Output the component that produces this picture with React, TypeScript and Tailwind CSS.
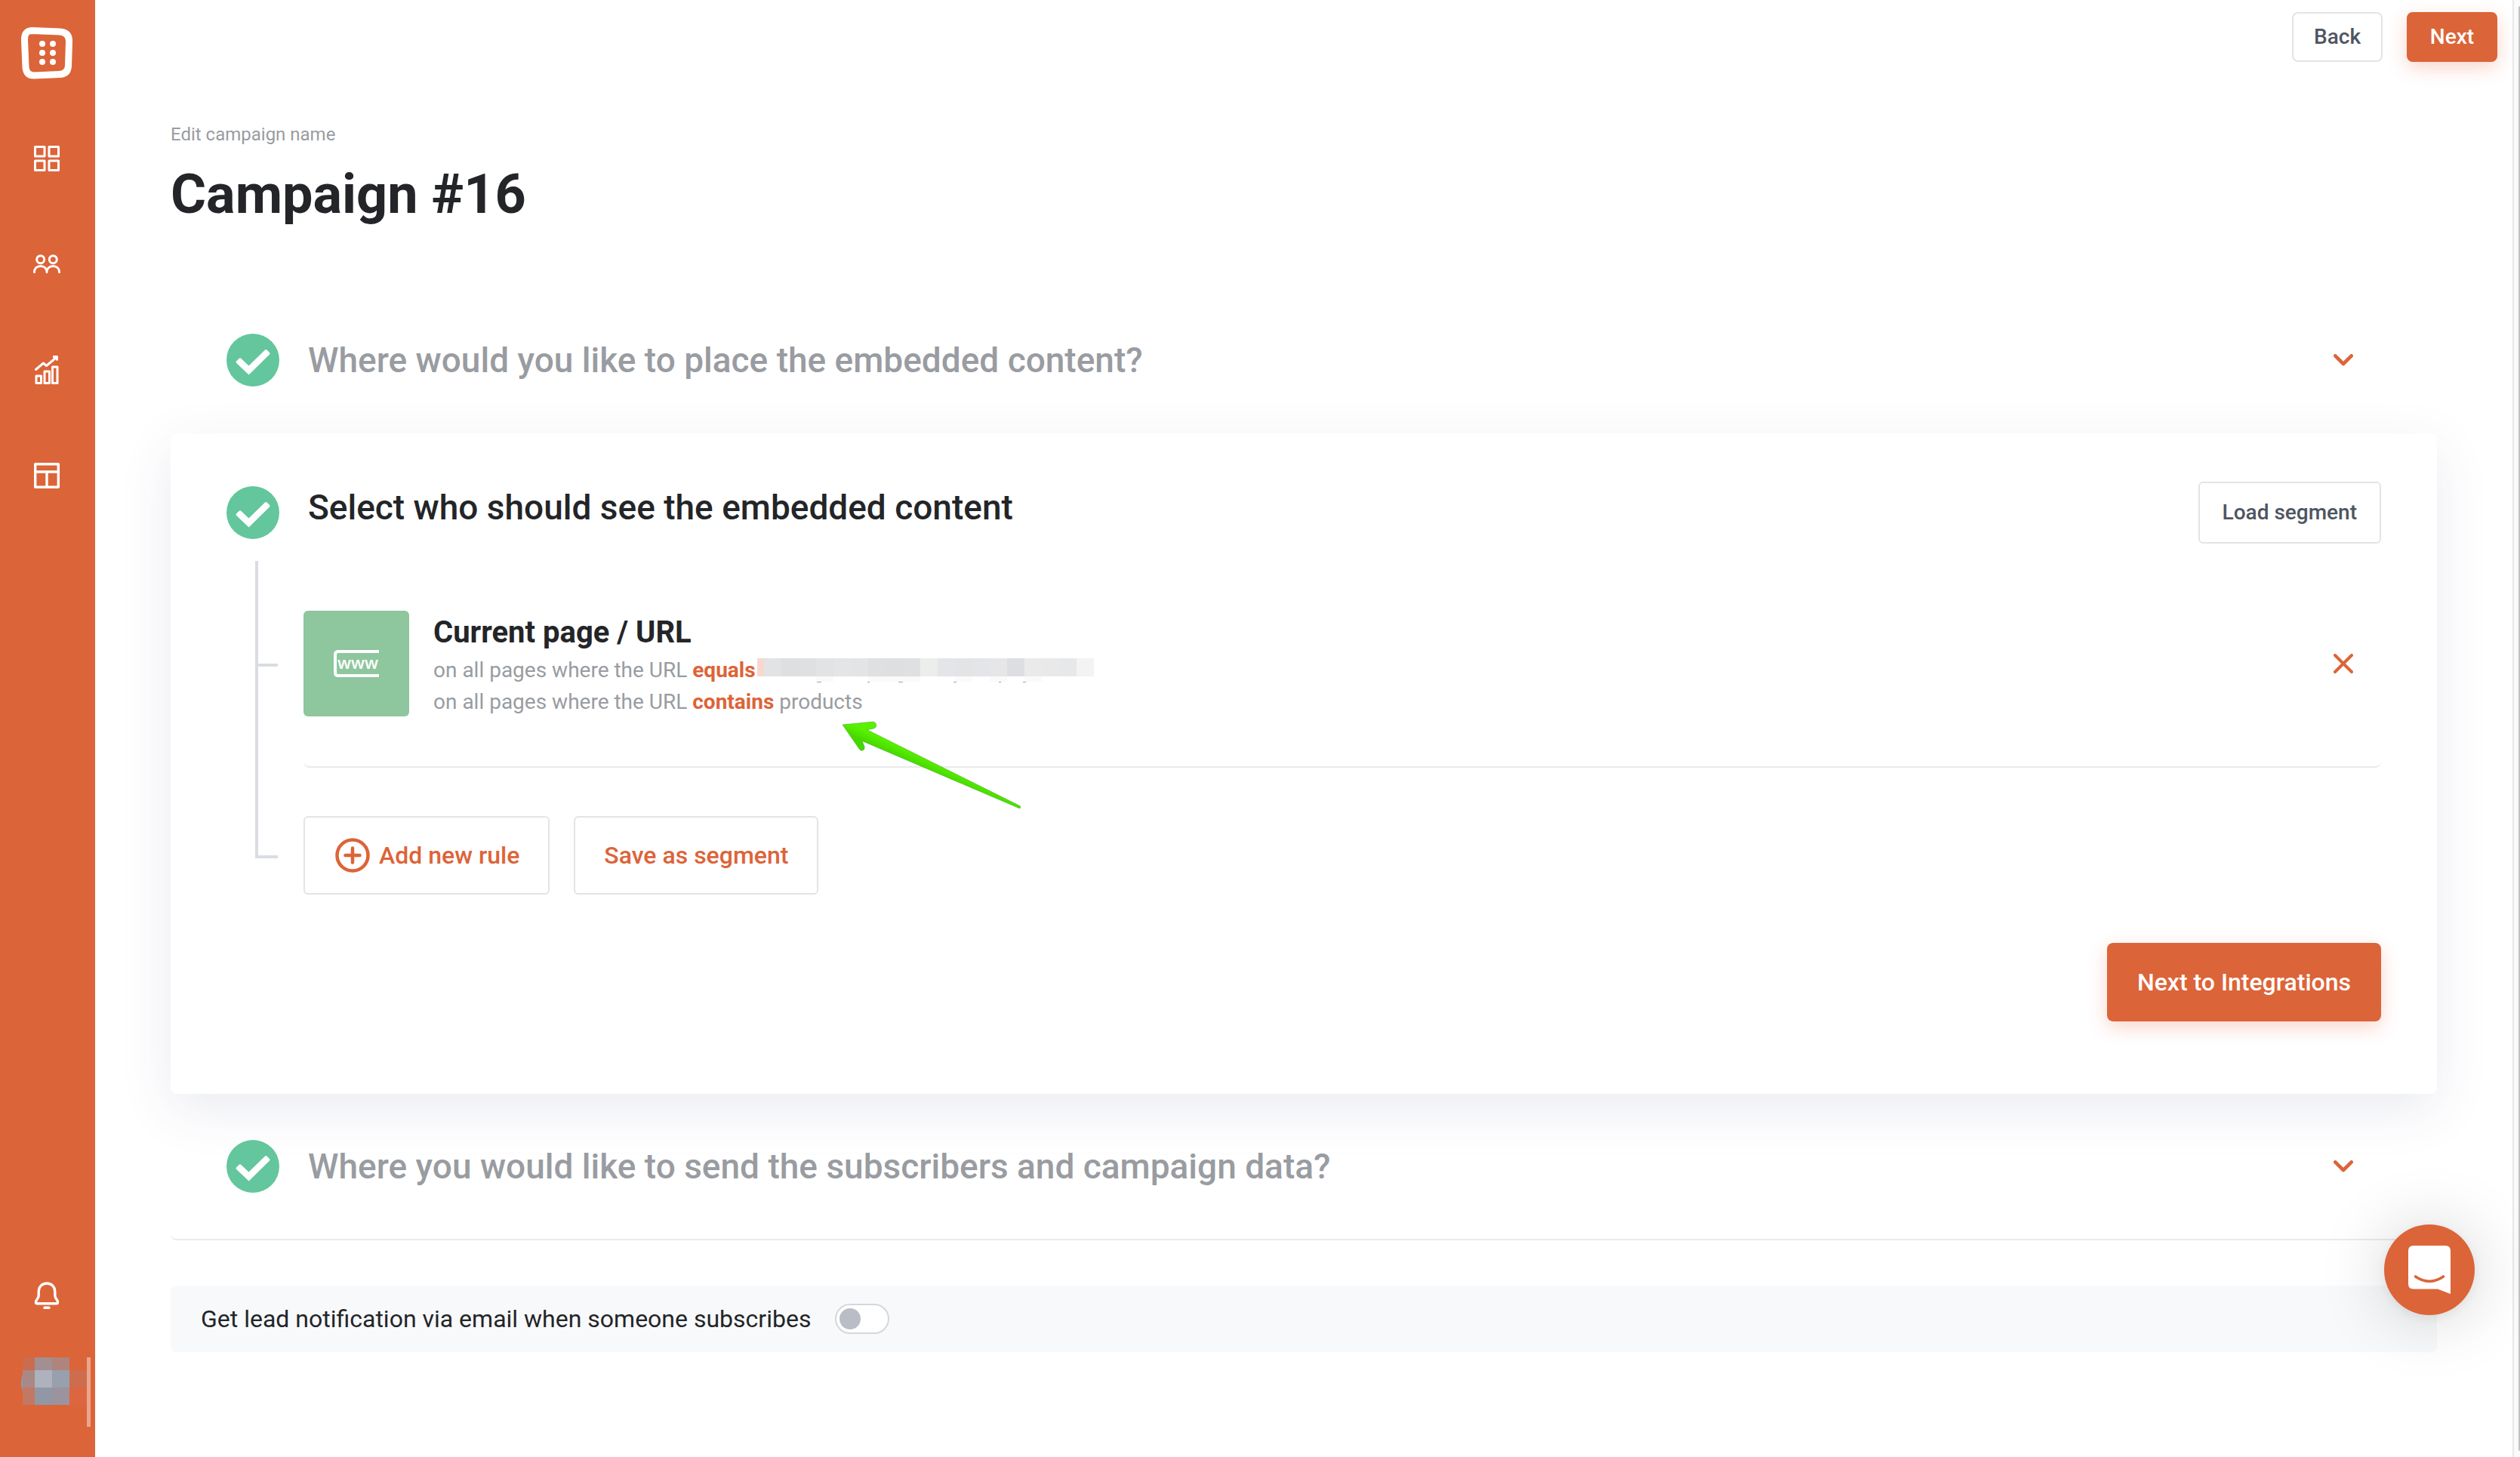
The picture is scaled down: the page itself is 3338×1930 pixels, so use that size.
import { useState } from "react";
import type { ReactNode } from "react";

function Logo() {
  return (
    <svg width="70" height="70" viewBox="0 0 70 70" fill="none">
      <path
        d="M15 5.5 L52 7 Q65 8 64.5 20 L63.5 52 Q63 63 52 63.5 L18 65 Q8 65 7 54 L5.5 18 Q5 6 15 5.5 Z"
        stroke="#fff"
        strokeWidth="9"
        strokeLinejoin="round"
      />
      <g fill="#fff">
        <circle cx="29" cy="23" r="4" />
        <circle cx="43" cy="23" r="4" />
        <circle cx="29" cy="35" r="4" />
        <circle cx="43" cy="35" r="4" />
        <circle cx="29" cy="47" r="4" />
        <circle cx="43" cy="47" r="4" />
      </g>
    </svg>
  );
}

function GridIcon() {
  return (
    <svg width="34" height="34" viewBox="0 0 34 34" fill="none" stroke="#fff" strokeWidth="3" strokeLinejoin="round">
      <rect x="1.5" y="1.5" width="12.5" height="12.5" />
      <rect x="20" y="1.5" width="12.5" height="12.5" />
      <rect x="1.5" y="20" width="12.5" height="12.5" />
      <rect x="20" y="20" width="12.5" height="12.5" />
    </svg>
  );
}

function PeopleIcon() {
  return (
    <svg width="36" height="26" viewBox="0 0 36 26" fill="none" stroke="#fff" strokeWidth="3" strokeLinecap="round" strokeLinejoin="round">
      <circle cx="9.7" cy="6.7" r="5" />
      <circle cx="26.3" cy="6.7" r="5" />
      <path d="M1.5 23.5 C1.5 18.5 5 15.5 9.7 15.5 C14.4 15.5 18 18.5 18 23.5 C18 18.5 21.6 15.5 26.3 15.5 C31 15.5 34.5 18.5 34.5 23.5" />
    </svg>
  );
}

function ChartIcon() {
  return (
    <svg width="32" height="40" viewBox="0 0 32 40" fill="none" stroke="#fff" strokeWidth="3" strokeLinejoin="round">
      <rect x="2" y="28" width="6.5" height="9.5" />
      <rect x="13" y="22" width="6.5" height="15.5" />
      <rect x="23.5" y="16" width="6.5" height="21.5" />
      <path d="M1.5 19.5 L11.5 11 L15.5 14.5 L28.5 3.5" strokeLinecap="round" />
      <path d="M24 2.5 H29.5 V7.5" />
    </svg>
  );
}

function LayoutIcon() {
  return (
    <svg width="34" height="34" viewBox="0 0 34 34" fill="none" stroke="#fff" strokeWidth="3.4" strokeLinejoin="round">
      <rect x="1.7" y="1.7" width="30.6" height="30.6" />
      <path d="M2 12 H32 M17 12 V32" />
    </svg>
  );
}

function BellIcon() {
  return (
    <svg width="34" height="36" viewBox="0 0 34 36" fill="none" stroke="#fff" strokeWidth="3.4" strokeLinecap="round" strokeLinejoin="round">
      <path d="M17 2 C10.5 2 6.2 6.5 6.2 13 V18 C6.2 22.5 2.5 23.5 2.5 27 C2.5 28.3 3.3 28.8 4.5 28.8 H29.5 C30.7 28.8 31.5 28.3 31.5 27 C31.5 23.5 27.8 22.5 27.8 18 V13 C27.8 6.5 23.5 2 17 2 Z" />
      <path d="M14 34.2 H20" />
    </svg>
  );
}

function CheckBadge() {
  return (
    <svg className="shrink-0" width="70" height="70" viewBox="0 0 70 70">
      <circle cx="35" cy="35" r="35" fill="#63c69c" />
      <path
        d="M13 36.5 L16.5 33 Q18 31.7 19.5 33 L29.5 42.5 L51 21.5 Q52.3 20.3 53.6 21.5 L57 25 Q58.2 26.3 57 27.6 L29.6 54.5 L13 38.8 Q12 37.6 13 36.5 Z"
        fill="#fff"
      />
    </svg>
  );
}

function Chevron() {
  return (
    <svg width="26" height="16" viewBox="0 0 26 16" fill="none">
      <path d="M2.3 2.3 L13 13 L23.7 2.3" stroke="#dc6439" strokeWidth="4.6" strokeLinecap="round" strokeLinejoin="round" />
    </svg>
  );
}

const maskedCells = [
  "#e2e3e5", "#dedfe1", "#dfe0e2", "#e2e3e5", "#e4e5e7", "#e3e4e6", "#dfe0e2", "#dedfe1", "#dfe0e2", "#eceeec",
  "#e4e5e8", "#e3e4e6", "#e4e5e8", "#e6e5e8", "#dddee1", "#eaeaea", "#e9e9e9", "#e7e8ea", "#f3f3f3",
];
const faintCells = [[78, 23], [147, 69], [262, 23], [308, 23], [354, 23]];
const descenders = [[79, 6], [146, 3], [187, 6], [260, 4], [320, 3], [352, 4]];

function MaskedUrl() {
  return (
    <svg width="446" height="32" viewBox="0 0 446 32" shapeRendering="crispEdges" aria-label="Hidden URL">
      <rect x="0" y="0" width="9" height="24" fill="#f7d8cf" />
      {maskedCells.map((fill, i) => (
        <rect key={i} x={9 + i * 23} y="0" width="23" height="24" fill={fill} />
      ))}
      {faintCells.map(([x, w]) => (
        <rect key={x} x={x} y="24" width={w} height="7" fill="#fafafa" />
      ))}
      {descenders.map(([x, w]) => (
        <rect key={x} x={x} y="31" width={w} height="1" fill="#a0a3a6" />
      ))}
    </svg>
  );
}

function Arrow() {
  return (
    <svg className="pointer-events-none absolute top-[145px] left-[540px]" width="240" height="120" viewBox="0 0 240 120">
      <defs>
        <linearGradient id="arrow" gradientUnits="userSpaceOnUse" x1="78" y1="30" x2="70" y2="48">
          <stop offset="0.2" stopColor="#58f200" />
          <stop offset="0.9" stopColor="#46d800" />
        </linearGradient>
      </defs>
      <path
        d="M2 6 L42 2.2 C48 2 48 10.5 43 11 L34.5 12.7 L237 113.6 Q239 116 236.5 116.8 L28 27.5 L31 35 C32 39.5 27 42 24.5 38.5 Z"
        fill="url(#arrow)"
        stroke="#3fae10"
        strokeWidth="0.6"
      />
    </svg>
  );
}

function Avatar() {
  const cells = [
    ["#c96d4e", "#a18f92", "#af847c", "#dc6439"],
    ["#aa8885", "#adb2bc", "#989fad", "#ce6d4e"],
    ["#c27963", "#9297a6", "#9b939d", "#dc6640"],
  ];
  return (
    <svg className="overflow-visible" width="90" height="92" viewBox="0 0 90 92" shapeRendering="crispEdges">
      <path d="M0 22 Q-4 34 0 46 Z" fill="#8d97a8" />
      {cells.map((row, r) =>
        row.map((fill, c) => (
          <rect
            key={`${r}-${c}`}
            x={c === 0 ? 0 : 16 + (c - 1) * 23}
            y={r === 0 ? 0 : 17 + (r - 1) * 23}
            width={c === 0 ? 16 : 23}
            height={r === 0 ? 17 : 23}
            fill={fill}
          />
        )),
      )}
      <rect x="85" y="0" width="5" height="92" fill="#eba58c" />
    </svg>
  );
}

function NavItem({ label, children }: { label: string; children: ReactNode }) {
  return (
    <a href="#" aria-label={label} className="flex h-[140px] w-full items-center justify-center">
      {children}
    </a>
  );
}

function Sidebar() {
  return (
    <nav className="sticky top-0 flex h-screen w-[126px] shrink-0 flex-col bg-[#dc6439] pr-0.5">
      <NavItem label="Home"><Logo /></NavItem>
      <NavItem label="Dashboard"><GridIcon /></NavItem>
      <NavItem label="Subscribers"><PeopleIcon /></NavItem>
      <NavItem label="Analytics"><ChartIcon /></NavItem>
      <NavItem label="Templates"><LayoutIcon /></NavItem>
      <div className="mt-auto flex flex-col gap-16 pb-10">
        <button aria-label="Notifications" className="flex justify-center">
          <BellIcon />
        </button>
        <button aria-label="Account" className="self-end pr-1">
          <Avatar />
        </button>
      </div>
    </nav>
  );
}

function CollapsedStep({ title, last = false }: { title: string; last?: boolean }) {
  return (
    <section
      className={
        last
          ? "flex h-[194px] items-center rounded-lg border-b-2 border-[#e8eaec] px-[74px]"
          : "flex h-[194px] items-center px-[74px]"
      }
    >
      <CheckBadge />
      <h2 className="ml-[38px] flex-1 text-[46px] leading-[68px] font-medium text-[#999ca1]">{title}</h2>
      <button aria-label={`Expand: ${title}`} className="flex h-16 w-[100px] items-center justify-center">
        <Chevron />
      </button>
    </section>
  );
}

function RuleRow() {
  return (
    <div className="flex items-center rounded-lg border-b-2 border-[#e8eaec] py-[66px]">
      <div className="flex h-[140px] w-[140px] shrink-0 items-center justify-center rounded-md bg-[#8ec69d]">
        <svg width="60" height="36" viewBox="0 0 60 36">
          <path d="M60 2 H6 Q2 2 2 6 V30 Q2 34 6 34 H60" fill="none" stroke="#fff" strokeWidth="4" />
          <text x="5" y="25" fontSize="22" fontWeight="600" fill="#fff" fontFamily="Open Sans, sans-serif">
            www
          </text>
        </svg>
      </div>
      <div className="relative ml-8 h-[140px] flex-1">
        <h3 className="text-[40px] leading-[58px] font-bold text-[#232528]">Current page / URL</h3>
        <p className="flex h-[42px] items-center text-[28px] leading-[42px] whitespace-pre text-[#999ca1]">
          on all pages where the URL <strong className="mr-0.5 font-bold text-[#dc6439]">equals</strong>
          <MaskedUrl />
        </p>
        <p className="text-[28px] leading-[42px] text-[#999ca1]">
          on all pages where the URL <strong className="font-bold text-[#dc6439]">contains</strong> products
        </p>
        <Arrow />
      </div>
      <button aria-label="Remove rule" className="flex h-16 w-[100px] items-center justify-center">
        <svg width="26" height="26" viewBox="0 0 26 26">
          <path d="M2 2 L24 24 M24 2 L2 24" stroke="#dc6439" strokeWidth="4" strokeLinecap="round" />
        </svg>
      </button>
    </div>
  );
}

function ActiveStep() {
  return (
    <section className="rounded-lg bg-white px-[74px] pt-16 pb-24 shadow-[0_20px_70px_rgba(50,60,120,0.1)]">
      <div className="flex items-start">
        <div className="flex h-[82px] items-center">
          <CheckBadge />
        </div>
        <h2 className="ml-[38px] flex-1 text-[46px] leading-[68px] font-medium text-[#232528]">
          Select who should see the embedded content
        </h2>
        <button className="h-[82px] rounded-md border-2 border-[#e3e4e8] bg-white px-7.5 text-[28px] font-medium text-[#4e5562]">
          Load segment
        </button>
      </div>

      <div className="mt-[23px] flex">
        <div className="mr-[34px] ml-[38px] shrink-0">
          <div className="h-[140px] w-[30px] border-b-4 border-l-4 border-[#d9dde1]" />
          <div className="h-[254px] w-[30px] border-b-4 border-l-4 border-[#d9dde1]" />
        </div>
        <div className="flex-1">
          <RuleRow />
          <div className="mt-16 flex gap-8">
            <button className="flex h-[104px] items-center gap-3 rounded-md border-2 border-[#e3e4e8] bg-white pr-9.5 pl-10 text-[32px] font-medium text-[#dc6439]">
              <svg width="46" height="46" viewBox="0 0 46 46" fill="none" stroke="#dc6439" strokeWidth="4.5">
                <circle cx="23" cy="23" r="20.5" />
                <path d="M13.5 23 H32.5 M23 13.5 V32.5" strokeLinecap="round" />
              </svg>
              Add new rule
            </button>
            <button className="h-[104px] rounded-md border-2 border-[#e3e4e8] bg-white px-9.5 text-[32px] font-medium text-[#dc6439]">
              Save as segment
            </button>
          </div>
        </div>
      </div>

      <div className="mt-16 flex justify-end">
        <button className="h-[104px] rounded-lg bg-[#dc6439] px-10 text-[32px] font-medium text-white shadow-[0_8px_24px_rgba(235,90,50,0.25)]">
          Next to Integrations
        </button>
      </div>
    </section>
  );
}

function NotificationBar() {
  const [on, setOn] = useState(false);
  return (
    <label className="mt-[60px] flex h-[88px] items-center gap-8 rounded-lg bg-[#f8f9fb] px-10 text-[32px] text-[#232528]">
      Get lead notification via email when someone subscribes
      <input type="checkbox" role="switch" className="peer sr-only" checked={on} onChange={(e) => setOn(e.target.checked)} />
      <span className="flex h-10 w-18 items-center rounded-full border-2 border-[#d5d7dc] bg-white px-1 peer-checked:justify-end">
        <span className="h-7 w-7 rounded-full bg-[#b9bdc5]" />
      </span>
    </label>
  );
}

function ChatButton() {
  return (
    <button
      aria-label="Open chat"
      className="fixed right-[60px] bottom-[188px] flex h-[120px] w-[120px] items-center justify-center rounded-full bg-[#dc6439] shadow-[0_4px_16px_rgba(0,0,0,0.07),0_4px_90px_rgba(0,0,0,0.18)]"
    >
      <svg width="56" height="64" viewBox="0 0 56 64">
        <path d="M7 0 H49 Q56 0 56 7 V64 L39 57.5 H7 Q0 57.5 0 50.5 V7 Q0 0 7 0 Z" fill="#fff" />
        <path d="M9.5 41 Q28 53.5 46.5 41" fill="none" stroke="#dc6439" strokeWidth="3.6" strokeLinecap="round" />
      </svg>
    </button>
  );
}

export default function App() {
  return (
    <div className="flex min-h-screen bg-white font-[Roboto,sans-serif]">
      <Sidebar />
      <main className="min-w-0 flex-1">
        <header className="flex justify-end gap-8 pt-4 pr-5 pb-3.5">
          <button className="h-[66px] w-[120px] rounded-lg border-2 border-[#e3e4e8] bg-white text-[28px] font-medium text-[#4e5562]">
            Back
          </button>
          <button className="h-[66px] w-[120px] rounded-lg bg-[#dc6439] text-[28px] font-medium text-white shadow-[0_8px_24px_rgba(235,90,50,0.25)]">
            Next
          </button>
        </header>
        <div className="px-[100px]">
          <div className="h-[284px] pt-[66px]">
            <label htmlFor="campaign-name" className="block text-[24px] leading-8 text-[#999ca1]">
              Edit campaign name
            </label>
            <input
              id="campaign-name"
              defaultValue="Campaign #16"
              className="mt-5 block h-[88px] w-full bg-transparent text-[72px] leading-[88px] font-bold text-[#232528] outline-none"
            />
          </div>
          <CollapsedStep title="Where would you like to place the embedded content?" />
          <ActiveStep />
          <CollapsedStep title="Where you would like to send the subscribers and campaign data?" last />
          <NotificationBar />
        </div>
      </main>
      <div className="sticky top-0 flex h-screen w-2.5 shrink-0 justify-end border-l-2 border-[#e8e8e8] bg-[#fafafa] py-2">
        <div className="w-0.5 rounded-l-full bg-[#c1c1c1]" />
      </div>
      <ChatButton />
    </div>
  );
}
